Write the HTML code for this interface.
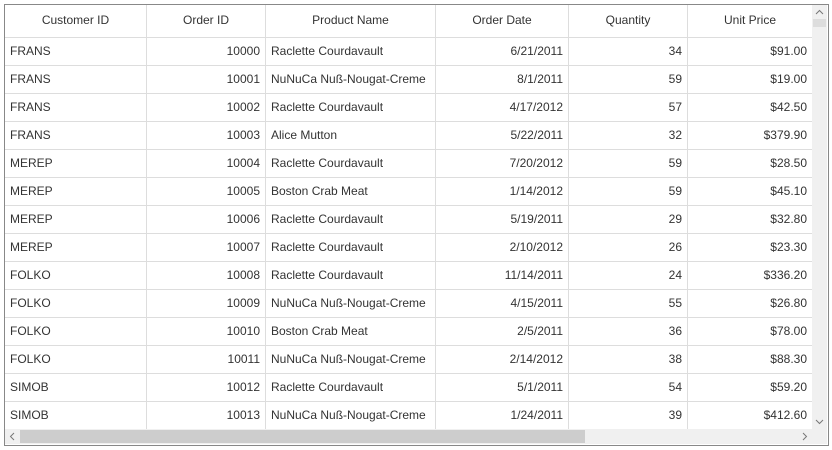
<!DOCTYPE html><html><head><style>
body{margin:0;width:832px;height:450px;background:#fff;font-family:"Liberation Sans",sans-serif;font-size:12px;color:#333;position:relative;overflow:hidden}
.box{position:absolute;left:4px;top:4px;width:823px;height:440px;border:1px solid #888;box-sizing:content-box}
.r{position:absolute;left:5px;width:807px;height:28px;border-bottom:1px solid #ddd;box-sizing:border-box}
.c{position:absolute;top:0;height:100%;line-height:27px;padding:0 5px;box-sizing:border-box;white-space:nowrap;border-right:1px solid #ddd}
.h .c{text-align:center;line-height:31px}
.rt{text-align:right}
</style></head><body>
<div class="box"></div>
<div id="g"></div>
<div style="position:absolute;left:812px;top:5px;width:15px;height:424px;background:#f0f0f0"></div>
<div style="position:absolute;left:813px;top:19px;width:13px;height:8px;background:#ddd"></div>
<svg style="position:absolute;left:812px;top:5px" width="15" height="15"><path d="M4 9 L7.5 5.5 L11 9" fill="none" stroke="#777"/></svg>
<svg style="position:absolute;left:812px;top:414px" width="15" height="15"><path d="M4 6 L7.5 9.5 L11 6" fill="none" stroke="#777"/></svg>
<div style="position:absolute;left:5px;top:429px;width:822px;height:15px;background:#f0f0f0"></div>
<div style="position:absolute;left:20px;top:430px;width:565px;height:13px;background:#cdcdcd"></div>
<svg style="position:absolute;left:5px;top:429px" width="15" height="15"><path d="M9 4 L5.5 7.5 L9 11" fill="none" stroke="#777"/></svg>
<svg style="position:absolute;left:797px;top:429px" width="15" height="15"><path d="M6 4 L9.5 7.5 L6 11" fill="none" stroke="#777"/></svg>
<script>
var cols=[[5,147],[147,266],[266,436],[436,569],[569,688],[688,812]];
var d=[["FRANS",10000,"Raclette Courdavault","6/21/2011",34,"$91.00"],["FRANS",10001,"NuNuCa Nuß-Nougat-Creme","8/1/2011",59,"$19.00"],["FRANS",10002,"Raclette Courdavault","4/17/2012",57,"$42.50"],["FRANS",10003,"Alice Mutton","5/22/2011",32,"$379.90"],["MEREP",10004,"Raclette Courdavault","7/20/2012",59,"$28.50"],["MEREP",10005,"Boston Crab Meat","1/14/2012",59,"$45.10"],["MEREP",10006,"Raclette Courdavault","5/19/2011",29,"$32.80"],["MEREP",10007,"Raclette Courdavault","2/10/2012",26,"$23.30"],["FOLKO",10008,"Raclette Courdavault","11/14/2011",24,"$336.20"],["FOLKO",10009,"NuNuCa Nuß-Nougat-Creme","4/15/2011",55,"$26.80"],["FOLKO",10010,"Boston Crab Meat","2/5/2011",36,"$78.00"],["FOLKO",10011,"NuNuCa Nuß-Nougat-Creme","2/14/2012",38,"$88.30"],["SIMOB",10012,"Raclette Courdavault","5/1/2011",54,"$59.20"],["SIMOB",10013,"NuNuCa Nuß-Nougat-Creme","1/24/2011",39,"$412.60"]];
var H=["Customer ID","Order ID","Product Name","Order Date","Quantity","Unit Price"];
var s='<div class="r h" style="top:5px;height:33px">';
H.forEach(function(t,i){var last=i==5?';border-right:0':'';s+='<div class="c" style="left:'+(cols[i][0]-5)+'px;width:'+(cols[i][1]-cols[i][0])+'px'+last+'">'+t+'</div>'});
s+='</div>';
d.forEach(function(r,k){s+='<div class="r" style="top:'+(37+k*28+1)+'px">';
r.forEach(function(t,i){var rt=(i==1||i==3||i==4||i==5)?' rt':'';var last=i==5?';border-right:0':'';s+='<div class="c'+rt+'" style="left:'+(cols[i][0]-5)+'px;width:'+(cols[i][1]-cols[i][0])+'px'+last+'">'+t+'</div>'});s+='</div>'});
document.getElementById('g').innerHTML=s;
</script>
</body></html>
